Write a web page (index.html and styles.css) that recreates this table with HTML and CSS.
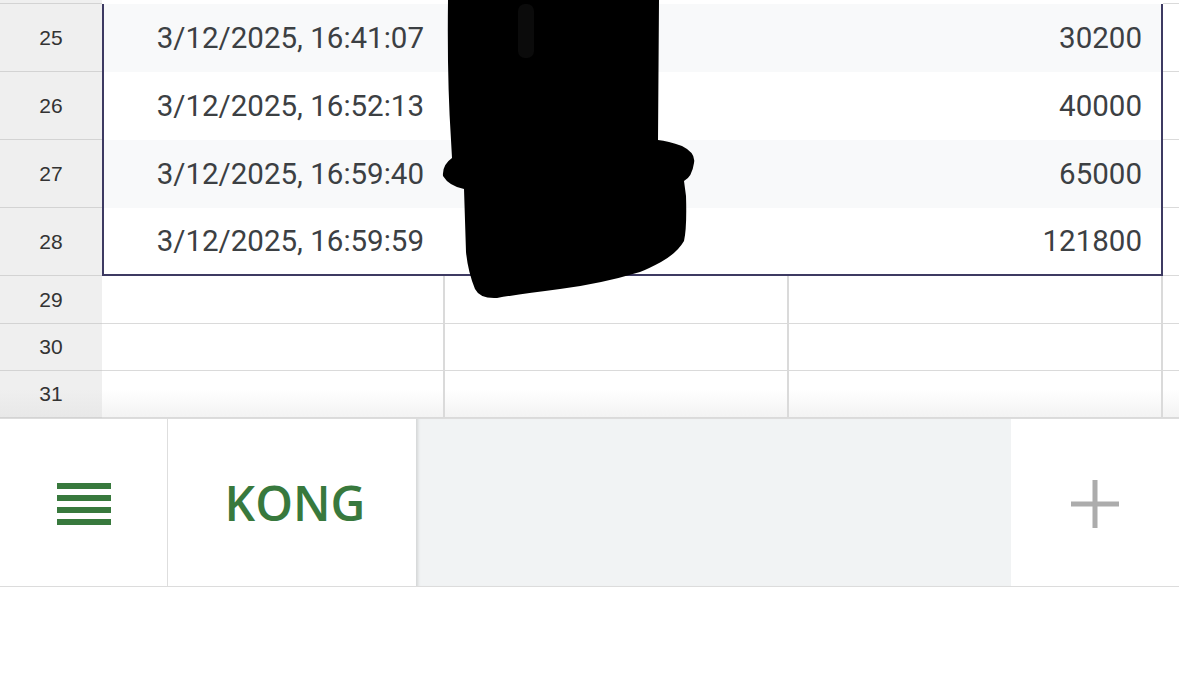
FILE: index.html
```html
<!DOCTYPE html>
<html>
<head>
<meta charset="utf-8">
<link rel="stylesheet" href="styles.css">
</head>
<body>
<div class="sheet">
  <div class="row partial">
    <div class="rh"></div>
    <div class="cells-partial"></div>
    <div class="strip"></div>
  </div>
  <div class="selgroup">
    <div class="rhcol">
      <div class="rh big">25</div>
      <div class="rh big">26</div>
      <div class="rh big">27</div>
      <div class="rh big">28</div>
    </div>
    <div class="selection">
      <div class="srow band"><div class="c1">3/12/2025, 16:41:07</div><div class="c2"></div><div class="c3">30200</div></div>
      <div class="srow"><div class="c1">3/12/2025, 16:52:13</div><div class="c2"></div><div class="c3">40000</div></div>
      <div class="srow band"><div class="c1">3/12/2025, 16:59:40</div><div class="c2"></div><div class="c3">65000</div></div>
      <div class="srow last"><div class="c1">3/12/2025, 16:59:59</div><div class="c2"></div><div class="c3">121800</div></div>
    </div>
    <div class="stripcol">
      <div class="strip big"></div>
      <div class="strip big"></div>
      <div class="strip big"></div>
      <div class="strip big"></div>
    </div>
  </div>
  <div class="row small r29">
    <div class="rh">29</div>
    <div class="cell w1"></div><div class="cell w2"></div><div class="cell w3"></div>
    <div class="strip"></div>
  </div>
  <div class="row small">
    <div class="rh">30</div>
    <div class="cell w1"></div><div class="cell w2"></div><div class="cell w3"></div>
    <div class="strip"></div>
  </div>
  <div class="row small fade">
    <div class="rh">31</div>
    <div class="cell w1"></div><div class="cell w2"></div><div class="cell w3"></div>
    <div class="strip"></div>
  </div>
</div>

<div class="tabbar">
  <div class="menu">
    <svg width="54" height="42" viewBox="0 0 54 42"><rect x="0" y="0" width="54" height="6" fill="#38793d"/><rect x="0" y="12" width="54" height="6" fill="#38793d"/><rect x="0" y="24" width="54" height="6" fill="#38793d"/><rect x="0" y="36" width="54" height="6" fill="#38793d"/></svg>
  </div>
  <div class="tab">KONG</div>
  <div class="tabspace"></div>
  <div class="add">
    <svg width="48" height="48" viewBox="0 0 48 48"><path d="M24 0V48M0 24H48" stroke="#acacac" stroke-width="5" fill="none"/></svg>
  </div>
</div>

<svg class="redact" width="260" height="300" viewBox="440 0 260 300">
  <path d="M448,0 L659,0 L658,140 Q668,141 682,146 Q696,153 694,163 Q692,177 684,181 L686,196 Q687,228 684,241 Q677,253 661,262 Q648,269 640,272 Q600,284 560,289 Q520,294 497,298 Q480,299 475,289 Q468,272 466,252 L464,189 Q449,186 443,176 Q442,165 452,158 L451,140 Q447,80 448,0 Z" fill="#000"/>
  <rect x="518" y="4" width="16" height="54" rx="7" fill="#0b0b0b"/>
</svg>
</body>
</html>
```

FILE: styles.css
```css
html, body {
  margin: 0;
  padding: 0;
  background: #ffffff;
}
body {
  width: 1179px;
  height: 689px;
  overflow: hidden;
  position: relative;
  font-family: Roboto, "Liberation Sans", sans-serif;
  color: #3c4043;
}
.sheet {
  display: flex;
  flex-direction: column;
  height: 418px;
}
.row {
  display: flex;
}
.partial {
  height: 4px;
}
.rh {
  width: 102px;
  flex: none;
  box-sizing: border-box;
  background: #efefef;
  border-bottom: 1px solid #d3d3d3;
  display: flex;
  align-items: center;
  justify-content: center;
  font-family: "Liberation Sans", Arial, sans-serif;
  font-size: 21px;
  color: #333333;
}
.partial .rh { height: 4px; }
.cells-partial {
  width: 1061px;
  background: #ffffff;
}
.strip {
  flex: 1;
  box-sizing: border-box;
  border-bottom: 1px solid #dadada;
  background: #ffffff;
}
.selgroup {
  display: flex;
  height: 272px;
}
.rhcol, .stripcol {
  display: flex;
  flex-direction: column;
}
.stripcol { flex: 1; }
.rh.big, .strip.big {
  height: 68px;
  flex: none;
}
.selection {
  width: 1061px;
  box-sizing: border-box;
  border: 2px solid #3d3a62;
  border-top: none;
  display: flex;
  flex-direction: column;
}
.srow {
  display: flex;
  height: 68px;
  align-items: center;
  background: #ffffff;
  font-size: 29.5px;
}
.srow.band { background: #f8f9fa; }
.srow.last { height: 66px; }
.c1 {
  width: 340px;
  box-sizing: border-box;
  padding-right: 20px;
  text-align: right;
}
.c2 { width: 344px; }
.c3 {
  width: 373px;
  box-sizing: border-box;
  padding-right: 19px;
  text-align: right;
}
.small { height: 47px; }
.r29 { height: 48px; }
.small .rh { height: 100%; }
.cell {
  box-sizing: border-box;
  border-bottom: 1px solid #dadada;
  border-right: 2px solid #dadada;
  background: #ffffff;
}
.w1 { width: 343px; }
.w2 { width: 344px; }
.w3 { width: 374px; }
.fade .cell, .fade .strip {
  background: linear-gradient(#ffffff 40%, #f3f3f3);
}
.fade .rh {
  background: linear-gradient(#efefef 40%, #e8e8e8);
}

.tabbar {
  display: flex;
  height: 169px;
  box-sizing: border-box;
  border-top: 1px solid #dcdcdc;
  border-bottom: 1px solid #dcdcdc;
}
.menu {
  width: 168px;
  box-sizing: border-box;
  border-right: 1px solid #dedede;
  display: flex;
  align-items: center;
  justify-content: center;
  padding-top: 2px;
}
.tab {
  width: 248px;
  display: flex;
  align-items: center;
  justify-content: center;
  background: #ffffff;
  color: #38793d;
  font-family: "Open Sans", Roboto, sans-serif;
  font-weight: 600;
  font-size: 48px;
  padding-left: 6px;
  box-sizing: border-box;
}
.tabspace {
  width: 595px;
  background: #f1f3f4;
  box-shadow: inset 4px 0 3px -2px rgba(0,0,0,0.12);
}
.add {
  flex: 1;
  display: flex;
  align-items: center;
  justify-content: center;
  padding-right: 1px;
  padding-top: 2px;
}
.redact {
  position: absolute;
  left: 440px;
  top: 0;
}
```
